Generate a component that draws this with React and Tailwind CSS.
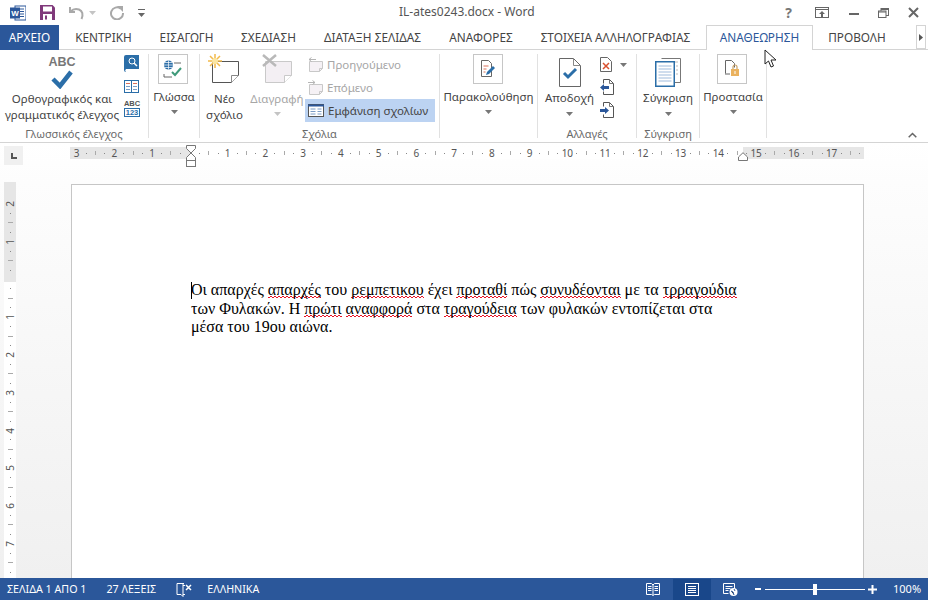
import React from "react";

const UI = "font-['Noto_Sans','Open_Sans',sans-serif]";

const tabs = [
  { label: "ΚΕΝΤΡΙΚΗ", w: "w-[89px]" },
  { label: "ΕΙΣΑΓΩΓΗ", w: "w-[77px]" },
  { label: "ΣΧΕΔΙΑΣΗ", w: "w-[87px]" },
  { label: "ΔΙΑΤΑΞΗ ΣΕΛΙΔΑΣ", w: "w-[121px]" },
  { label: "ΑΝΑΦΟΡΕΣ", w: "w-[96px]" },
  { label: "ΣΤΟΙΧΕΙΑ ΑΛΛΗΛΟΓΡΑΦΙΑΣ", w: "w-[173px]" },
];

// quarter centimetre steps, 0 is the left margin of the page
const hTicks = Array.from({ length: 84 }, (_, i) => i - 12);
const vTicks = Array.from({ length: 40 }, (_, i) => i - 8);

function Tick({ k, vertical }) {
  if (k % 4 === 0) {
    if (k === 0) return null;
    return <span className="text-[10px] leading-none text-[#555]">{Math.abs(k / 4)}</span>;
  }
  if (k % 2 === 0) {
    return <span className={vertical ? "w-[5px] h-px bg-[#aaa]" : "w-px h-[4px] bg-[#aaa]"} />;
  }
  return <span className="w-px h-px bg-[#888]" />;
}

function Caret({ light }) {
  return (
    <svg width="7" height="4" viewBox="0 0 7 4" className="block">
      <path d="M0 0h7L3.5 4z" fill={light ? "#c4c4c4" : "#777"} />
    </svg>
  );
}

function Group({ w, label, children }) {
  return (
    <div className={`${w} h-[84px] flex flex-col border-r border-[#e1e1e1] shrink-0`}>
      <div className="flex flex-1 min-h-0">{children}</div>
      <div className="h-[8px] text-center text-[11px] leading-[8px] text-[#6a6a6a] whitespace-nowrap">{label}</div>
    </div>
  );
}

function FramedButton({ label, children }) {
  return (
    <div className="flex-1 flex flex-col items-center">
      <div className="w-[30px] h-[30px] -translate-x-[1px] border border-[#c6c6c6] flex items-center justify-center">{children}</div>
      <div className="mt-[5px] text-[11.500px] leading-[16px] text-[#444] whitespace-nowrap">{label}</div>
      <div className="mt-[5px]"><Caret /></div>
    </div>
  );
}

function Note({ children, faded }) {
  return (
    <svg width="31" height="30" viewBox="0 0 31 30">
      <path d="M3.5 7.5h26v14l-7 7h-19z" fill={faded ? "#f3eff3" : "#fff"} stroke={faded ? "#c9c9c9" : "#555"} />
      <path d="M22.5 28.5v-7h7" fill="#fff" stroke={faded ? "#c9c9c9" : "#888"} />
      {children}
    </svg>
  );
}

function SmallNote({ arrow }) {
  return (
    <svg width="17" height="16" viewBox="0 0 17 16">
      <path d="M2.5 4.5h13v7l-3 3h-10z" fill="#f5f1f5" stroke="#c8c8c8" />
      <path d="M12.5 14.5v-3h3" fill="none" stroke="#c8c8c8" />
      <path d={arrow === "left" ? "M9 2.5H2M4.5 0.5l-2.5 2 2.5 2" : "M1 2.5h7M5.5 0.5l2.5 2-2.5 2"} fill="none" stroke="#b5b5b5" />
    </svg>
  );
}

function DocArrow({ dir }) {
  return (
    <svg width="14" height="16" viewBox="0 0 14 16">
      <path d="M3.5 4.5v-4h6l4 4v11h-10v-3" fill="#fff" stroke="#555" />
      <path d="M9.5.5v4h4" fill="none" stroke="#777" />
      <path
        d={dir === "left" ? "M0 8.5l4-3.5v2h5v3H4v2z" : "M9 8.5l-4-3.5v2H0v3h5v2z"}
        fill="#2b579a"
      />
    </svg>
  );
}

function Wavy({ children }) {
  return (
    <span className="bg-[linear-gradient(to_right,#e81123_50%,transparent_50%),linear-gradient(to_right,#e81123_50%,transparent_50%)] bg-[length:4px_1px] bg-[position:0_100%,2px_calc(100%-1px)] bg-repeat-x">
      {children}
    </span>
  );
}

export default function App() {
  return (
    <div className={`${UI} relative w-[928px] h-[600px] flex flex-col overflow-hidden bg-white`}>
      {/* Title bar */}
      <div className="h-[25px] flex items-center shrink-0 relative">
        <div className="flex items-center pl-[10px] gap-[14px]">
          <svg width="16" height="16" viewBox="0 0 16 16">
            <rect x="5" y="1" width="11" height="14" fill="#fff" stroke="#2b579a" />
            <path d="M9 4h5M9 6.5h5M9 9h5M9 11.500h5" stroke="#2b579a" />
            <rect x="0" y="2.500" width="10" height="11" fill="#2b579a" />
            <text x="5" y="11" textAnchor="middle" fontSize="8" fontWeight="700" fill="#fff" fontFamily="Liberation Sans">W</text>
          </svg>
          <svg width="15" height="15" viewBox="0 0 15 15">
            <path d="M0 0h12.500L15 2.500V15H0z" fill="#80397b" />
            <rect x="3" y="1.500" width="9" height="5" fill="#fff" />
            <rect x="3" y="9" width="9" height="6" fill="#fff" />
            <rect x="5" y="10.500" width="2" height="4" fill="#80397b" />
          </svg>
          <svg width="16" height="14" viewBox="0 0 16 14">
            <path d="M1 1v5h5" fill="none" stroke="#a9a9a9" strokeWidth="2" />
            <path d="M1.500 5.500C4 3 7 2.500 10 3.500c3.500 1.500 4.500 5 2.500 9.500" fill="none" stroke="#a9a9a9" strokeWidth="2" />
          </svg>
          <div className="-ml-[10px]"><Caret light /></div>
          <svg width="14" height="14" viewBox="0 0 14 14">
            <path d="M10.500 2.500A6 6 0 1 0 13 7" fill="none" stroke="#a9a9a9" strokeWidth="2" />
            <path d="M7 0h6v6z" fill="#a9a9a9" />
          </svg>
          <svg width="7" height="8" viewBox="0 0 7 8">
            <path d="M0 .5h7" stroke="#666" />
            <path d="M0 4h7L3.500 8z" fill="#666" />
          </svg>
        </div>
        <div className="absolute left-[399px] top-[3px] text-[12px] leading-[18px] text-[#555] whitespace-nowrap">IL-ates0243.docx - Word</div>
        <div className="ml-auto flex items-center gap-[17px] pr-[9px]">
          <span className="w-[13px] text-center text-[14px] font-bold leading-none text-[#777]">?</span>
          <svg width="14" height="11" viewBox="0 0 14 11" className="ml-[3px]">
            <rect x=".5" y=".5" width="13" height="10" fill="none" stroke="#666" />
            <path d="M0 2.500h14" stroke="#666" />
            <path d="M7 4l-3 3h2v3h2V7h2z" fill="#666" />
          </svg>
          <span className="w-[10px] h-[2px] bg-[#666] ml-[3px] mt-[3px]" />
          <svg width="11" height="10" viewBox="0 0 11 10" className="ml-[2px]">
            <rect x="3" y=".5" width="7.500" height="7" fill="none" stroke="#666" />
            <path d="M3 1.500h7.500" stroke="#666" />
            <rect x=".5" y="3" width="7.500" height="6.500" fill="#fff" stroke="#666" />
            <path d="M.5 4h7.500" stroke="#666" />
          </svg>
          <svg width="11" height="11" viewBox="0 0 11 11" className="ml-[2px]">
            <path d="M1 1l9 9M10 1l-9 9" stroke="#666" strokeWidth="2" />
          </svg>
        </div>
      </div>

      {/* Tabs */}
      <div className="h-[25px] flex shrink-0 relative text-[11.8px] text-[#444]">
        <div className="absolute left-0 right-0 bottom-0 h-px bg-[#d4d4d4]" />
        <div className="w-[59px] bg-[#2b579a] text-white flex items-center justify-center relative">ΑΡΧΕΙΟ</div>
        {tabs.map((t) => (
          <div key={t.label} className={`${t.w} flex items-center justify-center whitespace-nowrap relative`}>{t.label}</div>
        ))}
        <div className="ml-[4px] w-[107px] border border-b-0 border-[#d4d4d4] bg-white text-[#2b579a] flex items-center justify-center relative">ΑΝΑΘΕΩΡΗΣΗ</div>
        <div className="w-[88px] flex items-center justify-center relative">ΠΡΟΒΟΛΗ</div>
        <div className="ml-[15px] w-[10px] h-[24px] border border-[#d4d4d4] flex items-center justify-center relative">
          <svg width="4" height="7" viewBox="0 0 4 7"><path d="M0 0l4 3.500L0 7z" fill="#555" /></svg>
        </div>
      </div>

      {/* Ribbon */}
      <div className="h-[93px] shrink-0 flex pt-[4px] relative border-b border-[#d4d4d4] text-[#444]">
        <Group w="w-[149px]" label="Γλωσσικός έλεγχος">
          <div className="w-[124px] flex flex-col items-center">
            <div className="mt-[1px] text-[12.500px] font-bold leading-[14px] text-[#777] font-['Liberation_Sans',sans-serif]">ABC</div>
            <svg width="22" height="20" viewBox="0 0 22 20">
              <path d="M2 10l7 7L20 3" fill="none" stroke="#2b6ea8" strokeWidth="4.500" />
            </svg>
            <div className="mt-[2px] text-[11.500px] leading-[16px] text-center whitespace-nowrap">
              Ορθογραφικός και<br />γραμματικός έλεγχος
            </div>
          </div>
          <div className="flex flex-col items-start gap-[8px] pt-[1px]">
            <svg width="15" height="17" viewBox="0 0 15 17">
              <path d="M2 0h13v14H2a2 2 0 0 0 0 3h13-13a2 2 0 0 1-2-2V2a2 2 0 0 1 2-2z" fill="#2b6ea8" />
              <circle cx="8" cy="6" r="3" fill="#2b6ea8" stroke="#fff" />
              <path d="M10 8l3 3" stroke="#fff" strokeWidth="1.500" />
            </svg>
            <svg width="15" height="13" viewBox="0 0 15 13">
              <rect x=".5" y=".5" width="14" height="12" fill="#fff" stroke="#2b6ea8" />
              <path d="M7.500 0v13" stroke="#2b6ea8" />
              <path d="M2 3.500h4M9 3.500h4" stroke="#d9705a" />
              <path d="M2 6.500h4M9 6.500h4M2 9.500h4M9 9.500h4" stroke="#7a9cc6" />
            </svg>
            <div className="w-[16px] flex flex-col items-center -mt-[1px]">
              <span className="text-[7.500px] font-bold leading-[8px] text-[#555] font-['Liberation_Sans',sans-serif]">ABC</span>
              <span className="w-[16px] h-[9px] border border-[#2b6ea8] text-[#2b6ea8] text-[7.500px] font-bold leading-[7px] text-center font-['Liberation_Sans',sans-serif]">123</span>
            </div>
          </div>
        </Group>

        <Group w="w-[51px]" label="">
          <FramedButton label="Γλώσσα">
            <svg width="20" height="18" viewBox="0 0 20 18">
              <circle cx="5.500" cy="5" r="4.500" fill="#2b6ea8" />
              <path d="M1 5h9M5.500.5v9M2 2.500h7M2 7.500h7" stroke="#fff" strokeWidth=".7" />
              <path d="M11 3h7M1 14v3h8" fill="none" stroke="#666" />
              <path d="M9 12l3 3 6-7" fill="none" stroke="#3f9a7a" strokeWidth="2" />
            </svg>
          </FramedButton>
        </Group>

        <Group w="w-[240px]" label="Σχόλια">
          <div className="w-[49px] pl-[9px] flex flex-col items-start">
            <div className="relative">
              <Note />
              <svg width="14" height="14" viewBox="0 0 14 14" className="absolute -left-[1px] top-0">
                <path d="M7 0v14M0 7h14M2 2l10 10M12 2L2 12" stroke="#f2b94a" strokeWidth="1.500" />
                <circle cx="7" cy="7" r="3" fill="#fbe6a2" />
              </svg>
            </div>
            <div className="-ml-[9px] w-[49px] mt-[7px] text-center text-[11.500px] leading-[16px]">Νέο<br />σχόλιο</div>
          </div>
          <div className="w-[56px] flex flex-col items-center">
            <div className="relative">
              <Note faded />
              <svg width="16" height="14" viewBox="0 0 16 14" className="absolute left-0 top-0">
                <path d="M1 1l13 11M14 1L1 12" stroke="#b9b9b9" strokeWidth="2.500" />
              </svg>
            </div>
            <div className="mt-[7px] text-[11.500px] leading-[16px] text-[#a6a6a6]">Διαγραφή</div>
            <div className="mt-[5px]"><Caret light /></div>
          </div>
          <div className="w-[130px] -mt-[1px] flex flex-col text-[11.500px]">
            <div className="h-[23px] flex items-center gap-[3px] pl-[2px] text-[#a6a6a6]"><SmallNote arrow="left" />Προηγούμενο</div>
            <div className="h-[23px] flex items-center gap-[3px] pl-[2px] text-[#a6a6a6]"><SmallNote arrow="right" />Επόμενο</div>
            <div className="h-[23px] flex items-center gap-[4px] pl-[3px] bg-[#bcd3f2] whitespace-nowrap">
              <svg width="16" height="13" viewBox="0 0 16 13">
                <rect x=".5" y=".5" width="15" height="12" fill="#fff" stroke="#555" />
                <path d="M0 1.500h16" stroke="#2b579a" strokeWidth="2" />
                <path d="M2.500 5h5M2.500 7.500h5M2.500 10h5M9.500 5h4M9.500 7.500h4M9.500 10h4" stroke="#7a9cc6" />
              </svg>
              Εμφάνιση σχολίων
            </div>
          </div>
        </Group>

        <Group w="w-[98px]" label="">
          <FramedButton label="Παρακολούθηση">
            <svg width="16" height="18" viewBox="0 0 16 18">
              <path d="M1.500.5h7l3 3v13h-10z" fill="#fff" stroke="#666" />
              <path d="M3.500 6h5M3.500 9h3M3.500 12h2" stroke="#d9705a" />
              <path d="M6 15l1-3 6-6 2 2-6 6z" fill="#2b6ea8" />
            </svg>
          </FramedButton>
        </Group>

        <Group w="w-[99px]" label="Αλλαγές">
          <div className="w-[62px] pl-[1px] flex flex-col items-center">
            <svg width="22" height="29" viewBox="0 0 22 29" className="mt-[4px]">
              <path d="M.5.5h14l7 7v21H.500z" fill="#fff" stroke="#666" />
              <path d="M14.500.5v7h7" fill="none" stroke="#888" />
              <path d="M5 15l4 4 8-8" fill="none" stroke="#2b6ea8" strokeWidth="3" />
            </svg>
            <div className="mt-[3px] text-[11.500px] leading-[16px] whitespace-nowrap">Αποδοχή</div>
            <div className="mt-[6px]"><Caret /></div>
          </div>
          <div className="flex flex-col gap-[7px] pt-[3px]">
            <div className="flex items-center gap-[8px]">
              <svg width="12" height="15" viewBox="0 0 12 15">
                <path d="M.5.5h7l4 4v10H.5z" fill="#fff" stroke="#666" />
                <path d="M3 6l6 6M9 6l-6 6" stroke="#d9502e" strokeWidth="1.500" />
              </svg>
              <Caret />
            </div>
            <DocArrow dir="left" />
            <DocArrow dir="right" />
          </div>
        </Group>

        <Group w="w-[63px]" label="Σύγκριση">
          <div className="flex-1 flex flex-col items-center">
            <svg width="26" height="29" viewBox="0 0 26 29" className="mt-[4px]">
              <path d="M6.500.5h19v24h-6" fill="#fff" stroke="#777" />
              <path d="M18 4h5M21 8h2M21 12h2M21 16h2" stroke="#bbb" />
              <rect x=".75" y="3.750" width="18.500" height="24.500" fill="#fff" stroke="#2b6ea8" strokeWidth="1.500" />
              <path d="M3.500 8h13M3.500 11h13M3.500 14h13M3.500 17h13M3.500 20h13M3.500 23h13" stroke="#9fbbdc" />
            </svg>
            <div className="mt-[3px] text-[11.500px] leading-[16px] whitespace-nowrap">Σύγκριση</div>
            <div className="mt-[6px]"><Caret /></div>
          </div>
        </Group>

        <Group w="w-[67px]" label="">
          <FramedButton label="Προστασία">
            <svg width="16" height="18" viewBox="0 0 16 18">
              <path d="M1.500 13.500V.5h6l3 3v4" fill="none" stroke="#666" />
              <path d="M1 14h5" stroke="#666" />
              <rect x="7" y="9" width="8" height="7" fill="#eab25f" />
              <path d="M9 9V7a2 2 0 0 1 4 0v2" fill="none" stroke="#c9a36a" strokeWidth="1.200" />
              <rect x="10.500" y="11" width="1" height="3" fill="#fff" />
            </svg>
          </FramedButton>
        </Group>

        <svg width="9" height="6" viewBox="0 0 9 6" className="ml-auto mr-[11px] mt-[78px]">
          <path d="M.7 5.300L4.500 1.500l3.800 3.800" fill="none" stroke="#666" strokeWidth="1.500" />
        </svg>
      </div>

      {/* Horizontal ruler */}
      <div className="h-[39px] shrink-0 relative flex items-start bg-gradient-to-b from-white to-[#fdfdfd]">
        <div className="ml-[4px] mt-[3px] w-[19px] h-[19px] bg-[#f0f0f0] flex items-center justify-center">
          <svg width="6" height="6" viewBox="0 0 6 6"><path d="M1 0v5h5" fill="none" stroke="#555" strokeWidth="2" /></svg>
        </div>
        <div className="ml-[47px] mt-[4px] w-[794px] h-[12px] flex items-center pl-[1.900px] bg-[linear-gradient(to_right,#e6e6e6_120px,#fff_120px,#fff_673px,#e6e6e6_673px)]">
          {hTicks.map((k) => (
            <div key={k} className="w-[9.450px] shrink-0 flex items-center justify-center">
              <Tick k={k} />
            </div>
          ))}
        </div>
        {/* indent markers */}
        <svg width="12" height="23" viewBox="0 0 12 23" className="absolute left-[185px] top-[2px]">
          <path d="M1.500.5h9v3L6 8 1.500 3.500zM6 8l4.500 4.500v3h-9v-3z" fill="#fff" stroke="#777" />
          <rect x="1.500" y="15.500" width="9" height="6" fill="#fff" stroke="#777" />
        </svg>
        <svg width="12" height="9" viewBox="0 0 12 9" className="absolute left-[737px] top-[9px]">
          <path d="M6 .7l4.500 4.300v3.500h-9V5z" fill="#fff" stroke="#777" />
        </svg>
      </div>

      {/* Document area */}
      <div className="flex-1 min-h-0 flex items-start overflow-hidden bg-gradient-to-b from-[#fdfdfd] to-[#f0f0f0]">
        <div className="ml-[4px] w-[12px] shrink-0 flex flex-col items-center pt-[17.300px] bg-[linear-gradient(to_bottom,#e6e6e6_100px,#fff_100px)] h-[396px]">
          {vTicks.map((k) => (
            <div key={k} className="h-[9.450px] shrink-0 flex items-center justify-center">
              {k % 4 === 0 && k !== 0 ? (
                <span className="text-[10px] leading-none text-[#555] [writing-mode:vertical-rl] rotate-180">{Math.abs(k / 4)}</span>
              ) : (
                <Tick k={k} vertical />
              )}
            </div>
          ))}
        </div>
        <div className="ml-[55px] mt-[2px] w-[793px] h-[500px] shrink-0 bg-white border border-[#c6c6c6] pl-[119px] pt-[96px] pr-[100px] font-['Liberation_Serif',serif] text-[16px] leading-[18.700px] text-black relative">
          <span className="absolute left-[119px] top-[97px] w-px h-[17px] bg-black" />
          <p className="whitespace-nowrap">
            Οι απαρχές <Wavy>απαρχές</Wavy> του <Wavy>ρεμπετικου</Wavy> έχει <Wavy>προταθί</Wavy> πώς <Wavy>συνυδέονται</Wavy> με τα <Wavy>τρραγούδια</Wavy>
            <br />
            των Φυλακών. Η <Wavy>πρώτι</Wavy> <Wavy>αναφφορά</Wavy> στα <Wavy>τραγούδεια</Wavy> των φυλακών εντοπίζεται στα
            <br />
            μέσα του 19ου αιώνα.
          </p>
        </div>
      </div>

      {/* Status bar */}
      <div className="h-[22px] shrink-0 bg-[#2b579a] text-white text-[10.700px] flex items-center">
        <span className="ml-[7px] whitespace-nowrap">ΣΕΛΙΔΑ 1 ΑΠΟ 1</span>
        <span className="ml-[20px] whitespace-nowrap">27 ΛΕΞΕΙΣ</span>
        <svg width="16" height="15" viewBox="0 0 16 15" className="ml-[20px]">
          <path d="M8 1.500H1v11h4l2 2V1.500M7 3.500h2M7 12.500h2" fill="none" stroke="#fff" />
          <path d="M10 3l5 5M15 3l-5 5" stroke="#fff" strokeWidth="1.500" />
        </svg>
        <span className="ml-[15px] whitespace-nowrap">ΕΛΛΗΝΙΚΑ</span>
        <div className="ml-auto flex items-center h-full">
          <svg width="14" height="13" viewBox="0 0 14 13">
            <path d="M.5.5h5L7 2 8.500.5h5v11h-5L7 12.500 5.500 11.500h-5zM7 2v10" fill="none" stroke="#fff" />
            <path d="M2 3.500h3.500M2 5.500h3.500M2 7.500h3.500M8.500 3.500H12M8.500 5.500H12M8.500 7.500H12" stroke="#fff" />
          </svg>
          <div className="ml-[13px] w-[38px] h-[21px] bg-[#19478a] flex items-center justify-center">
            <svg width="14" height="13" viewBox="0 0 14 13">
              <rect x=".5" y=".5" width="13" height="12" fill="none" stroke="#fff" />
              <path d="M3 3.500h8M3 5.500h8M3 7.500h8M3 9.500h8" stroke="#fff" />
            </svg>
          </div>
          <svg width="15" height="13" viewBox="0 0 15 13" className="ml-[12px]">
            <path d="M.5.5h11v5M.5.5v10h5" fill="none" stroke="#fff" />
            <path d="M2.500 3.500h7M2.500 5.500h5M2.500 7.500h3" stroke="#fff" />
            <circle cx="10.500" cy="9" r="4" fill="#fff" />
            <path d="M8 8l2 1 1 3M11 6l1 2" stroke="#2b579a" />
          </svg>
          <span className="ml-[17px] w-[6px] h-[2px] bg-white" />
          <div className="ml-[4px] w-[100px] h-px bg-white flex items-center pl-[48px]">
            <span className="w-[4px] h-[11px] bg-white" />
          </div>
          <svg width="9" height="9" viewBox="0 0 9 9" className="ml-[3px]">
            <path d="M4.500 0v9M0 4.500h9" stroke="#fff" strokeWidth="2" />
          </svg>
          <span className="ml-[16px] w-[35px] text-[11px]">100%</span>
        </div>
      </div>

      {/* Mouse pointer over the ribbon */}
      <svg width="14" height="20" viewBox="0 0 14 20" className="absolute left-[764px] top-[49px]">
        <path d="M1 1v14l3.500-3 2.500 6 2.500-1-2.500-6h5z" fill="#fff" stroke="#222" />
      </svg>
    </div>
  );
}
